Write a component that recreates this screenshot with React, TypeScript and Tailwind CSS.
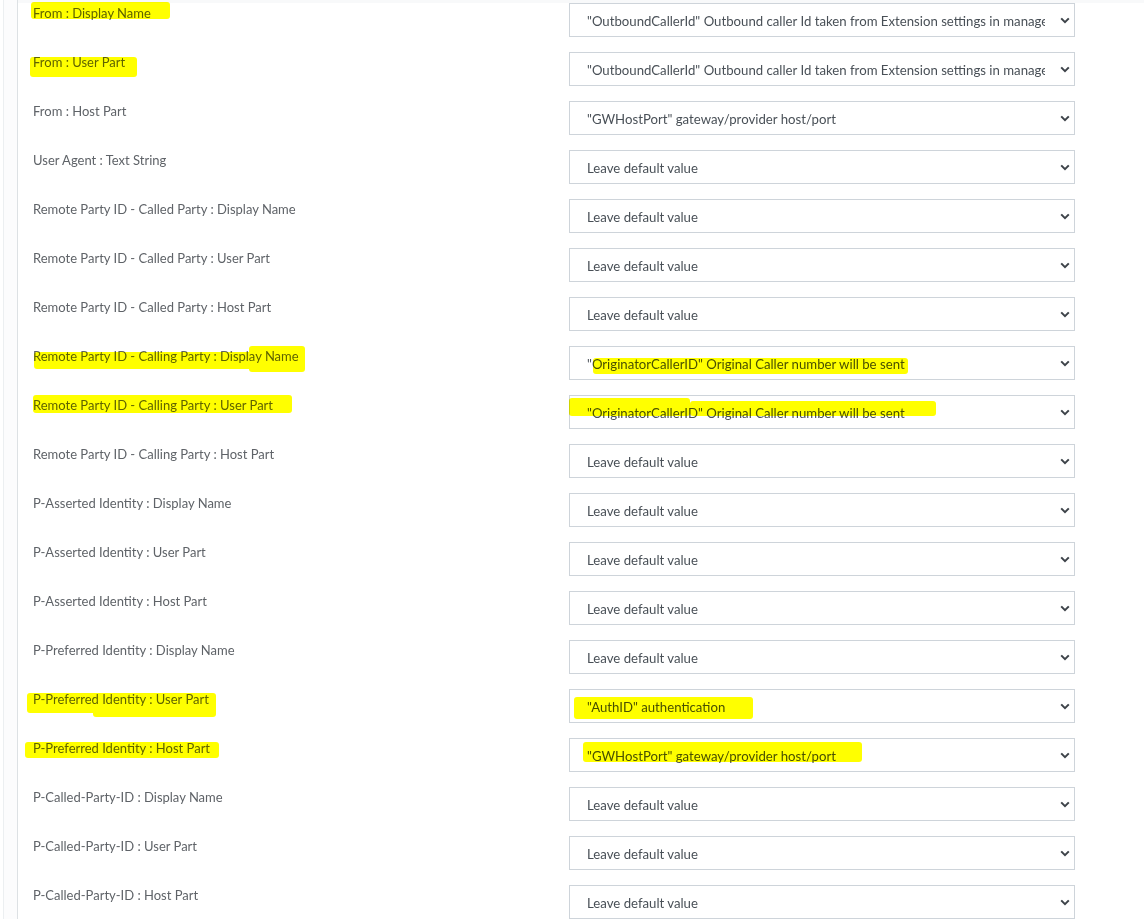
import React from "react";

type Row = { label: string; value: string };

const rows: Row[] = [
  { label: "From : Display Name", value: '"OutboundCallerId" Outbound caller Id taken from Extension settings in management console' },
  { label: "From : User Part", value: '"OutboundCallerId" Outbound caller Id taken from Extension settings in management console' },
  { label: "From : Host Part", value: '"GWHostPort" gateway/provider host/port' },
  { label: "User Agent : Text String", value: "Leave default value" },
  { label: "Remote Party ID - Called Party : Display Name", value: "Leave default value" },
  { label: "Remote Party ID - Called Party : User Part", value: "Leave default value" },
  { label: "Remote Party ID - Called Party : Host Part", value: "Leave default value" },
  { label: "Remote Party ID - Calling Party : Display Name", value: '"OriginatorCallerID" Original Caller number will be sent' },
  { label: "Remote Party ID - Calling Party : User Part", value: '"OriginatorCallerID" Original Caller number will be sent' },
  { label: "Remote Party ID - Calling Party : Host Part", value: "Leave default value" },
  { label: "P-Asserted Identity : Display Name", value: "Leave default value" },
  { label: "P-Asserted Identity : User Part", value: "Leave default value" },
  { label: "P-Asserted Identity : Host Part", value: "Leave default value" },
  { label: "P-Preferred Identity : Display Name", value: "Leave default value" },
  { label: "P-Preferred Identity : User Part", value: '"AuthID" authentication' },
  { label: "P-Preferred Identity : Host Part", value: '"GWHostPort" gateway/provider host/port' },
  { label: "P-Called-Party-ID : Display Name", value: "Leave default value" },
  { label: "P-Called-Party-ID : User Part", value: "Leave default value" },
  { label: "P-Called-Party-ID : Host Part", value: "Leave default value" },
];

// marker strokes drawn on top of the screenshot: [left, top, width, height]
const marks: [number, number, number, number][] = [
  [31, 2, 139, 17],
  [30, 57, 107, 20],
  [34, 352, 271, 17],
  [249, 346, 56, 26],
  [33, 395, 259, 18],
  [593, 358, 315, 16],
  [569, 398, 121, 18],
  [690, 401, 246, 15],
  [27, 693, 189, 20],
  [93, 700, 123, 17],
  [25, 742, 194, 16],
  [574, 697, 179, 22],
  [583, 742, 279, 20],
];

const Chevron = () => (
  <svg width="10" height="7" viewBox="0 0 10 7" className="shrink-0">
    <path d="M1.2 1.4 5 5.2 8.8 1.4" fill="none" stroke="#3d4349" strokeWidth="2" />
  </svg>
);

export default function App() {
  return (
    <div
      className="relative w-[1144px] h-[919px] overflow-hidden bg-white flex"
      style={{ fontFamily: "Lato, 'Noto Sans', sans-serif" }}
    >
      <div className="w-[3px] bg-white" />
      <div className="w-px bg-[#eceff1]" />
      <div className="w-[13px] bg-[#fcfcfd]" />
      <div className="w-px bg-[#dde1e4]" />
      <div className="flex-1 flex flex-col">
        <div className="h-[4px] bg-[#f8f9fa]" />
        <div className="flex flex-col gap-[15px]">
          {rows.map((r) => (
            <div key={r.label} className="flex h-[34px]">
              <div className="w-[551px] pl-[15px] pt-px text-[13px] leading-[18px] text-[#5f6368]">
                {r.label}
              </div>
              <div className="w-[506px] h-[34px] border border-[#ced4da] bg-white flex items-center pl-[17px] pr-[4px]">
                <div className="flex-1 overflow-hidden whitespace-nowrap text-[13.2px] leading-[18px] text-[#495057] mr-[15px] mt-[2px]">
                  {r.value}
                </div>
                <Chevron />
              </div>
            </div>
          ))}
        </div>
      </div>
      {marks.map(([l, t, w, h], i) => (
        <div
          key={i}
          className="absolute bg-[#ffff00] mix-blend-multiply rounded-[3px]"
          style={{ left: l, top: t, width: w, height: h }}
        />
      ))}
    </div>
  );
}
